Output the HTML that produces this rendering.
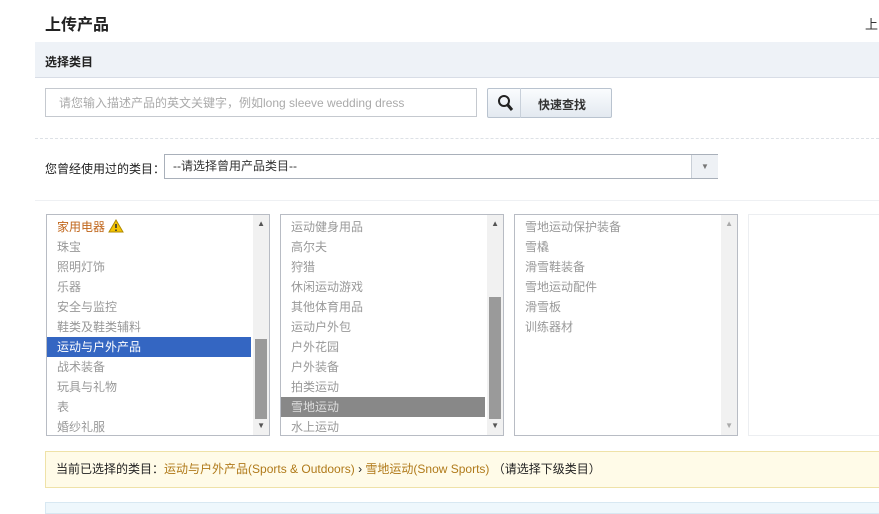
<html><head><style>
body{margin:0;width:879px;height:510px;overflow:hidden;background:#fff;font-family:"Liberation Sans","Noto Sans CJK SC",sans-serif;font-size:12px;position:relative}
.a{position:absolute}
.box{position:absolute;top:214px;width:222px;height:220px;border:1px solid #b8bcc4;background:#fff;overflow:hidden}
.box div.i{height:20px;line-height:20px;padding-left:10px;color:#999;white-space:nowrap}
.sb{position:absolute;right:0;top:0;width:16px;height:220px;background:#f1f1f1}
.th{position:absolute;right:2px;width:12px;background:#9a9a9a}
.ar{position:absolute;right:4px;font-size:8px;color:#555}
</style></head><body>
<div class="a" style="left:45px;top:11px;font-size:16px;font-weight:bold;color:#222">上传产品</div>
<div class="a" style="left:865px;top:14px;font-size:13px;color:#333">上</div>
<div class="a" style="left:35px;top:42px;width:844px;height:35px;background:#eef2f7;border-bottom:1px solid #d8dde6"></div>
<div class="a" style="left:45px;top:53px;font-size:12px;font-weight:bold;color:#222">选择类目</div>
<div class="a" style="left:45px;top:88px;height:29px;border:1px solid #c5c9cf;line-height:29px;padding-left:13px;box-sizing:border-box;width:432px;color:#aaa">请您输入描述产品的英文关键字，例如long sleeve wedding dress</div>
<div class="a" style="left:487px;top:88px;width:125px;height:30px;border:1px solid #b9c3cf;border-radius:2px;background:linear-gradient(#fafcfe,#e3e9f0);box-sizing:border-box"></div>
<div class="a" style="left:520px;top:88px;width:1px;height:30px;background:#c8d0da"></div>
<svg class="a" style="left:497px;top:94px" width="20" height="20"><circle cx="7" cy="7" r="5" fill="none" stroke="#222" stroke-width="2"/><path d="M10 10l5 6" stroke="#222" stroke-width="3"/></svg>
<div class="a" style="left:538px;top:96px;font-weight:bold;color:#333">快速查找</div>
<div class="a" style="left:35px;top:138px;width:844px;border-top:1px dashed #dde1e6"></div>
<div class="a" style="left:45px;top:160px;color:#222">您曾经使用过的类目：</div>
<div class="a" style="left:164px;top:154px;width:554px;height:25px;border:1px solid #a9b0ba;box-sizing:border-box;line-height:23px;padding-left:8px;color:#333">--请选择曾用产品类目--</div>
<div class="a" style="left:691px;top:155px;width:26px;height:23px;background:#eef1f5;border-left:1px solid #c9cfd7;color:#777;font-size:8px;text-align:center;line-height:23px">▼</div>
<div class="a" style="left:35px;top:200px;width:844px;border-top:1px solid #eef0f3"></div>
<div class="box" style="left:46px">
<div style="height:2px"></div>
<div class="i" style="color:#c0651a">家用电器 <svg width="16" height="14" style="vertical-align:-2px"><path d="M8 1L15 13H1Z" fill="#f5c400" stroke="#b08a00"/><path d="M8 5v4M8 10.5v1.5" stroke="#333" stroke-width="1.6"/></svg></div>
<div class="i">珠宝</div><div class="i">照明灯饰</div><div class="i">乐器</div><div class="i">安全与监控</div><div class="i">鞋类及鞋类辅料</div>
<div class="i" style="background:#3466c2;color:#fff;margin-right:18px">运动与户外产品</div>
<div class="i">战术装备</div><div class="i">玩具与礼物</div><div class="i">表</div><div class="i">婚纱礼服</div>
<div class="sb"><div class="th" style="top:124px;height:80px"></div><div class="ar" style="top:4px">▲</div><div class="ar" style="top:206px">▼</div></div>
</div>
<div class="box" style="left:280px">
<div style="height:2px"></div>
<div class="i">运动健身用品</div><div class="i">高尔夫</div><div class="i">狩猎</div><div class="i">休闲运动游戏</div><div class="i">其他体育用品</div><div class="i">运动户外包</div><div class="i">户外花园</div><div class="i">户外装备</div><div class="i">拍类运动</div>
<div class="i" style="background:#888;color:#ddd;margin-right:18px">雪地运动</div>
<div class="i">水上运动</div>
<div class="sb"><div class="th" style="top:82px;height:122px"></div><div class="ar" style="top:4px">▲</div><div class="ar" style="top:206px">▼</div></div>
</div>
<div class="box" style="left:514px">
<div style="height:2px"></div>
<div class="i">雪地运动保护装备</div><div class="i">雪橇</div><div class="i">滑雪鞋装备</div><div class="i">雪地运动配件</div><div class="i">滑雪板</div><div class="i">训练器材</div>
<div class="sb"><div class="ar" style="top:4px;color:#aaa">▲</div><div class="ar" style="top:206px;color:#aaa">▼</div></div>
</div>
<div class="box" style="left:748px;border-color:#eceef1;width:140px"></div>
<div class="a" style="left:45px;top:451px;width:840px;height:37px;background:#fffbe8;border:1px solid #efe2a8;box-sizing:border-box;line-height:35px;padding-left:10px;color:#222">当前已选择的类目：<span style="color:#b07a1a">运动与户外产品(Sports &amp; Outdoors)</span> › <span style="color:#b07a1a">雪地运动(Snow Sports)</span> （请选择下级类目）</div>
<div class="a" style="left:45px;top:502px;width:840px;height:10px;background:#eef7fc;border:1px solid #d8e8f2"></div>
</body></html>
